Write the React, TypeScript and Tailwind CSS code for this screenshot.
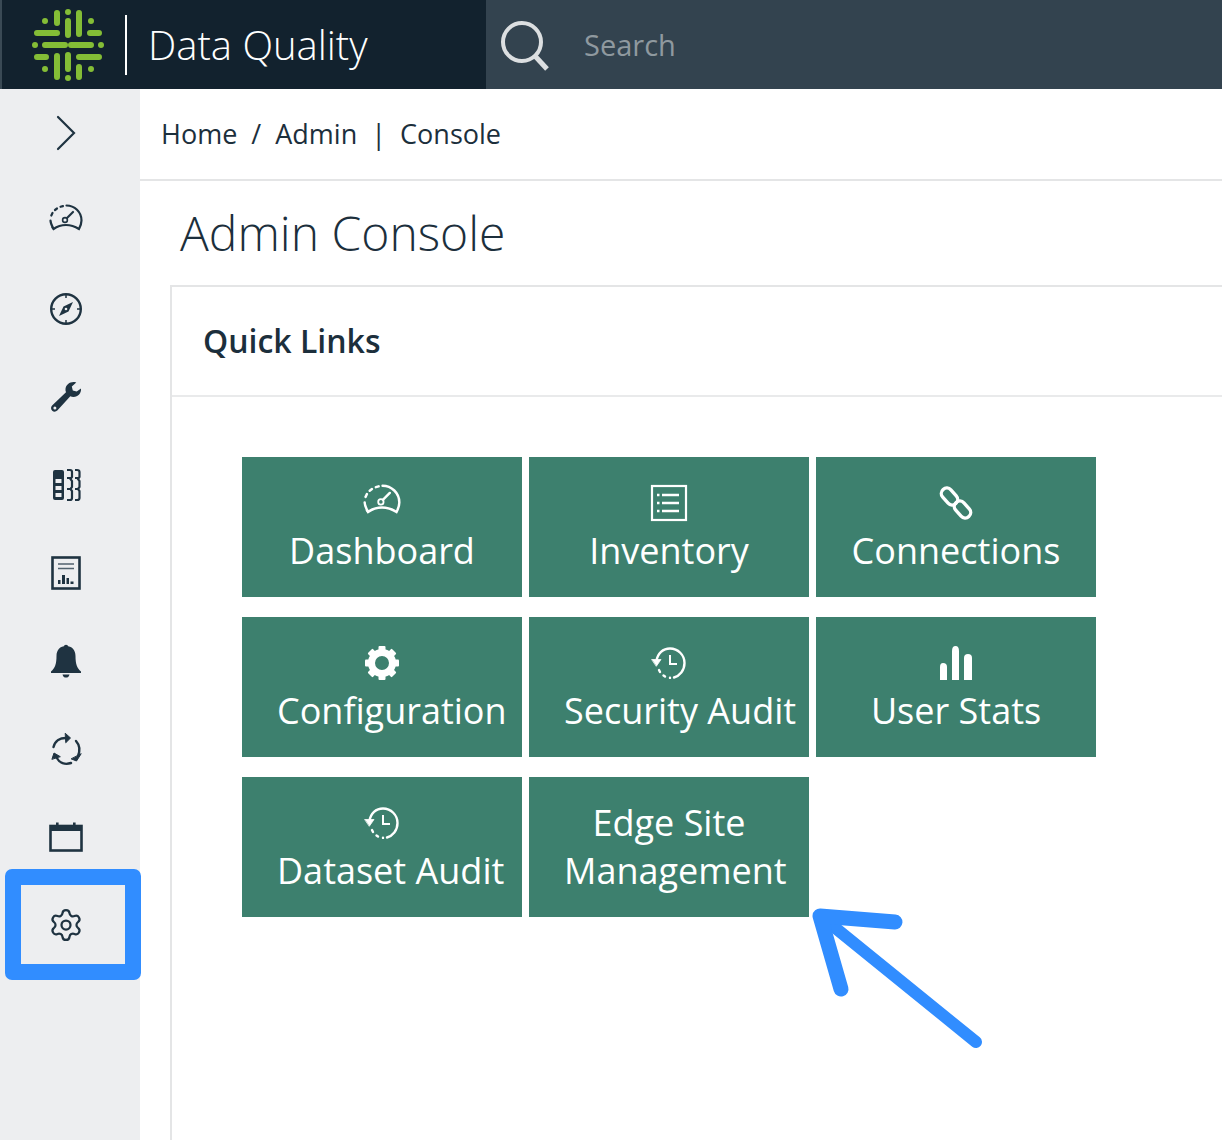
import React from "react";
import { Settings } from "lucide-react";

const Logo = () => (
  <svg width="80" height="80" viewBox="-40 -40 80 80" stroke="#84bd36" strokeWidth="6" strokeLinecap="round" fill="#84bd36">
    <path d="M0-24V-10M0 10V24M-11-32V-22M11-32V-11M-11 11V32M11 22V32" />
    <path d="M-31-12H-11M22-12H31M-23 0H-3M3 0H23M-31 12H-22M11 12H31" />
    <g stroke="none">
      <circle cx="0" cy="-33" r="3" /><circle cx="0" cy="33" r="3" />
      <circle cx="-33" cy="0" r="3" /><circle cx="33" cy="0" r="3" />
      <circle cx="-23" cy="-24" r="3" /><circle cx="23" cy="-24" r="3" />
      <circle cx="-23" cy="24" r="3" /><circle cx="23" cy="24" r="3" />
    </g>
  </svg>
);

const Gauge = ({ c = "#1f3341", s = 34 }: { c?: string; s?: number }) => (
  <svg width={s} height={s} viewBox="0 0 34 34" fill="none" stroke={c} strokeWidth="2.2" strokeLinecap="round">
    <path d="M4 24C2.500 21 1.500 19 1.500 16.500" />
    <path d="M2.300 11.500L3.500 9M6 6L8 4.500M11.500 2.800L14 2.100M17.500 1.500C25.500 1.500 32.500 8 32.500 16.500C32.500 19 31.800 21.500 30 25C26 22.500 22 21 17 21C12 21 8 22.500 4.500 25L3.500 23.500" />
    <circle cx="16" cy="16" r="2.400" strokeWidth="1.600" />
    <path d="M18 14L24 8" />
  </svg>
);

const Compass = () => (
  <svg width="34" height="34" viewBox="0 0 34 34" fill="none" stroke="#1f3341">
    <circle cx="17" cy="17" r="14.800" strokeWidth="2.400" />
    <path d="M17 2.500V6M17 28V31.500M2.500 17H6M28 17H31.500" strokeWidth="1.500" />
    <path d="M24 10L19.500 19.500L10 24L14.500 14.500Z" fill="#1f3341" stroke="none" />
    <circle cx="17" cy="17" r="1.300" fill="#edeef0" stroke="none" />
  </svg>
);

const Wrench = () => (
  <svg width="32" height="32" viewBox="0 0 32 32" fill="#1f3341">
    <path d="M31 7.500C31.500 12 28 16 23.500 16C22.300 16 21.300 15.800 20.300 15.300L7.300 29.500C5.800 31 3.600 31 2.200 29.700C0.700 28.300 0.700 26 2.100 24.600L16 11.300C15.500 10.200 15.300 9 15.500 7.800C16 3.500 20 0.500 24.500 1C25.200 1.100 25.800 1.200 26.300 1.500L21.800 5.600L22.800 9.500L26.700 10.600Z" />
    <circle cx="4.900" cy="26.900" r="1.500" fill="#edeef0" />
  </svg>
);

const Columns = () => (
  <svg width="30" height="34" viewBox="0 0 30 34" fill="none">
    <rect x="2" y="2" width="11" height="30" rx="2" fill="#1f3341" />
    <path d="M4.500 11H10.500V15H4.500ZM4.500 18H10.500V22H4.500ZM4.500 25H10.500V29H4.500Z" fill="#edeef0" />
    <path d="M16 2H19Q21 2 21 4V9L19.500 11L21 13V19L19.500 21L21 23V30Q21 32 19 32H16M16 10H20M16 21H20" stroke="#1f3341" strokeWidth="2.200" />
    <path d="M24 2H26Q28.500 2 28.500 4V9L27 11L28.500 13V19L27 21L28.500 23V30Q28.500 32 26 32H24M24 10H27.500M24 21H27.500" stroke="#1f3341" strokeWidth="2.200" />
  </svg>
);

const Report = () => (
  <svg width="30" height="34" viewBox="0 0 30 34" fill="none">
    <rect x="1.500" y="1.500" width="27" height="31" stroke="#1f3341" strokeWidth="2.600" />
    <path d="M7 8H23M7 12.500H23" stroke="#51626e" strokeWidth="1.600" />
    <path d="M7 24H9.500V28H7ZM11 19H14V28H11ZM15.500 22H18V28H15.500ZM19.500 25.500H22.500V28H19.500Z" fill="#1f3341" />
  </svg>
);

const Bell = () => (
  <svg width="32" height="34" viewBox="0 0 32 34" fill="#1f3341">
    <circle cx="16" cy="3" r="2.200" />
    <path d="M16 2C10 2 6.500 6 6.500 12C6.500 20 5 24 1 27.500V29H31V27.500C27 24 25.500 20 25.500 12C25.500 6 22 2 16 2Z" />
    <path d="M12.500 30.500H19.500C19 33 17.500 33.500 16 33.500C14.500 33.500 13 33 12.500 30.500Z" />
  </svg>
);

const Cycle = () => (
  <svg width="34" height="34" viewBox="0 0 34 34" fill="none" stroke="#1f3341" strokeWidth="2.400" strokeLinecap="round">
    <path d="M4.500 15C6 9 11 5.500 18 6" />
    <path d="M16.500 1.500L21.500 6L17 10.500Z" fill="#1f3341" strokeWidth="1" strokeLinejoin="round" />
    <path d="M27 9C31 13.500 31 19 29 24" />
    <path d="M32 22L27.500 29L22.500 27Z" fill="#1f3341" strokeWidth="1" strokeLinejoin="round" />
    <path d="M22 31C16 33 10.500 31 7.500 25.500" />
    <path d="M3 27L5 21L11 24.500Z" fill="#1f3341" strokeWidth="1" strokeLinejoin="round" />
  </svg>
);

const Calendar = () => (
  <svg width="34" height="30" viewBox="0 0 34 30" fill="none">
    <rect x="1.500" y="4" width="31" height="24.500" stroke="#1f3341" strokeWidth="2.600" />
    <rect x="1" y="3.500" width="32" height="5.500" fill="#1f3341" />
    <rect x="7" y="0.500" width="2.600" height="4" fill="#1f3341" />
    <rect x="24" y="0.500" width="2.600" height="4" fill="#1f3341" />
  </svg>
);

const ListIcon = () => (
  <svg width="38" height="38" viewBox="0 0 38 38" fill="none" stroke="#fff">
    <rect x="2" y="2" width="34" height="34" strokeWidth="2.200" />
    <path d="M12 11H29M12 19H29M12 27H29" strokeWidth="2.400" />
    <path d="M7 11H9.500M7 19H9.500M7 27H9.500" strokeWidth="2.400" />
  </svg>
);

const LinkIcon = () => (
  <svg width="38" height="38" viewBox="0 0 38 38" fill="none" stroke="#fff" strokeWidth="3.400">
    <rect x="3" y="7" width="19" height="11" rx="5.500" transform="rotate(48 12.500 12.500)" />
    <rect x="16" y="20" width="19" height="11" rx="5.500" transform="rotate(48 25.500 25.500)" />
  </svg>
);

const Cog = () => (
  <svg width="36" height="36" viewBox="0 0 36 36">
    <g fill="#fff">
      {[0, 45, 90, 135, 180, 225, 270, 315].map((a) => (
        <rect key={a} x="14.500" y="1" width="7" height="8" rx="1" transform={`rotate(${a} 18 18)`} />
      ))}
    </g>
    <circle cx="18" cy="18" r="10.500" fill="none" stroke="#fff" strokeWidth="7" />
  </svg>
);

const HistoryIcon = () => (
  <svg width="38" height="38" viewBox="0 0 38 38" fill="none" stroke="#fff" strokeWidth="2.400" strokeLinecap="round">
    <path d="M6.500 17C7.500 9.500 13 4.500 20 4.500C28 4.500 34.500 11 34.500 19C34.500 26.500 29.500 32 24 33.500" />
    <path d="M2 15.500H11L6.500 22Z" fill="#fff" strokeWidth="0.800" strokeLinejoin="round" />
    <path d="M20 33.800V33.900M13.500 31.500L15 32.500M9 26L10 28" />
    <path d="M20 11V20H27" strokeWidth="2" strokeLinecap="butt" />
  </svg>
);

const Bars = () => (
  <svg width="36" height="36" viewBox="0 0 36 36" fill="#fff">
    <path d="M2 35V22Q2 18 5 18Q9 18 9 22V35Z" />
    <path d="M14 35V6Q14 1 17.500 1Q21 1 21 6V35Z" />
    <path d="M26 35V13Q26 9 30 9Q34 9 34 13V35Z" />
  </svg>
);

const NAV: React.ReactNode[] = [
  <svg key="c" width="24" height="36" viewBox="0 0 24 36" fill="none" stroke="#1f3341" strokeWidth="2.200" strokeLinecap="round"><path d="M4 2L20 18L4 34" /></svg>,
  <Gauge key="g" />,
  <Compass key="co" />,
  <Wrench key="w" />,
  <Columns key="col" />,
  <Report key="r" />,
  <Bell key="b" />,
  <Cycle key="cy" />,
  <Calendar key="ca" />,
  <Settings key="s" size={36} color="#1f3341" strokeWidth={1.500} />,
];

const BUTTONS: { icon?: React.ReactNode; lines: string[] }[] = [
  { icon: <Gauge c="#fff" s={38} />, lines: ["Dashboard"] },
  { icon: <ListIcon />, lines: ["Inventory"] },
  { icon: <LinkIcon />, lines: ["Connections"] },
  { icon: <Cog />, lines: ["Configuration"] },
  { icon: <HistoryIcon />, lines: ["Security Audit"] },
  { icon: <Bars />, lines: ["User Stats"] },
  { icon: <HistoryIcon />, lines: ["Dataset Audit"] },
  { lines: ["Edge Site", "Management"] },
];

export default function App() {
  return (
    <div className="relative w-[1222px] h-[1140px] overflow-hidden bg-white font-['Open_Sans',sans-serif] text-[#1c2f3c]">
      <header className="flex h-[89px] border-l-2 border-[#3a4a55]">
        <div className="flex w-[484px] items-center bg-[#12222e] pl-[26px]">
          <Logo />
          <div className="ml-[17px] h-[60px] w-[2px] bg-white" />
          <div className="ml-[21px] text-[40px] font-light leading-none text-white">Data Quality</div>
        </div>
        <div className="flex flex-1 items-center bg-[#33434f] pl-[10px]">
          <svg width="56" height="56" viewBox="0 0 56 56" fill="none" stroke="#dcdfe1" strokeWidth="4">
            <circle cx="26" cy="25" r="19" />
            <path d="M39 39L51 52" strokeWidth="5" />
          </svg>
          <div className="ml-[32px] text-[29px] leading-none text-[#8f999f]">Search</div>
        </div>
      </header>
      <div className="flex h-[1051px]">
        <aside className="w-[140px] shrink-0 bg-[#edeef0]">
          {NAV.map((n, i) => (
            <div key={i} className="flex h-[88px] w-[132px] items-center justify-center">{n}</div>
          ))}
        </aside>
        <main className="flex min-w-0 flex-1 flex-col">
          <div className="flex h-[92px] shrink-0 items-center border-b-2 border-[#e4e5e6] pb-[2px] pl-[21px] text-[27px] leading-none whitespace-pre">
            Home  /  Admin  |  Console
          </div>
          <h1 className="flex h-[104px] shrink-0 items-center pl-[40px] text-[48px] font-light leading-none">Admin Console</h1>
          <section className="ml-[30px] flex-1 border-l-2 border-t-2 border-[#e4e5e6]">
            <div className="flex h-[110px] items-center border-b-2 border-[#e9eaeb] pl-[31px] text-[32px] font-semibold leading-none">Quick Links</div>
            <div className="grid grid-cols-[280px_280px_280px] gap-x-[7px] gap-y-[20px] pl-[70px] pt-[60px]">
              {BUTTONS.map((b, i) => (
                <div key={i} className="flex h-[140px] flex-col justify-center bg-[#3d806e] px-[35px] text-center text-[36px] leading-[48px] whitespace-nowrap text-white">
                  {b.icon && <div className="flex h-[48px] items-center justify-center">{b.icon}</div>}
                  {b.lines.map((l) => (
                    <div key={l}>{l}</div>
                  ))}
                </div>
              ))}
            </div>
          </section>
        </main>
      </div>
      <div className="absolute left-[5px] top-[869px] h-[111px] w-[136px] rounded-[7px] border-[16px] border-[#318dff]" />
      <svg className="absolute left-[800px] top-[895px]" width="200" height="170" viewBox="0 0 200 170" fill="none" stroke="#318dff" strokeLinecap="round" strokeLinejoin="round">
        <path d="M176 147L28 27" strokeWidth="12" />
        <path d="M95 27L20 21L41 94" strokeWidth="15" />
      </svg>
    </div>
  );
}
